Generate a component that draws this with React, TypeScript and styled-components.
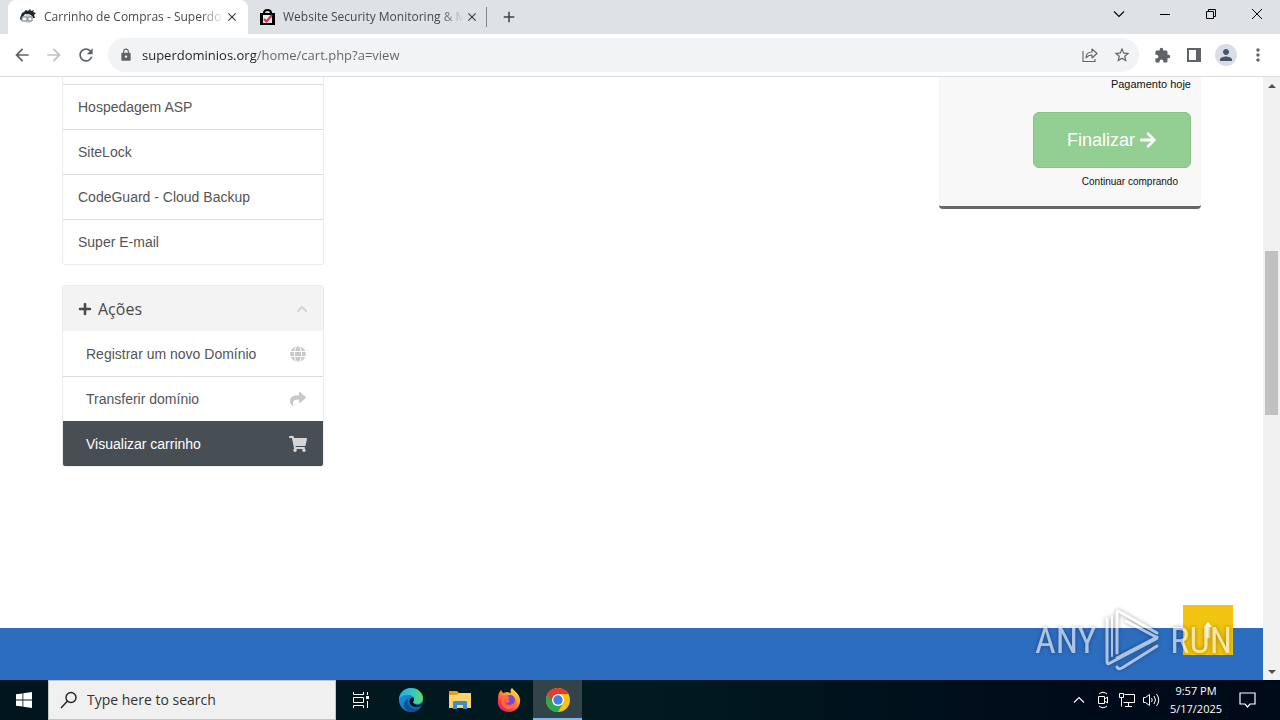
import React from "react";
import styled, { createGlobalStyle, css } from "styled-components";
import {
  MdArrowBack,
  MdArrowForward,
  MdClose,
  MdExtension,
  MdLock,
  MdMoreVert,
  MdPerson,
  MdRefresh,
  MdStarBorder,
  MdAdd,
} from "react-icons/md";
import {
  FaArrowRight,
  FaChevronUp,
  FaGlobe,
  FaPlus,
  FaShare,
  FaShoppingCart,
} from "react-icons/fa";

const uiFont = `"Open Sans", "Noto Sans", sans-serif`;
const pageFont = `"Liberation Sans", Arial, sans-serif`;

const GlobalStyle = createGlobalStyle`
  *, *::before, *::after { box-sizing: border-box; }
  body { margin: 0; background: #fff; overflow: hidden; }
  button, input { font: inherit; color: inherit; margin: 0; padding: 0; border: 0; background: none; }
  a { color: inherit; text-decoration: none; }
  svg { display: block; flex: none; }
  ul { list-style: none; margin: 0; padding: 0; }
`;

const Desktop = styled.div`
  position: relative;
  display: flex;
  flex-direction: column;
  height: 100vh;
  font-family: ${uiFont};
`;

/* Browser window */

const TabStrip = styled.header`
  display: flex;
  align-items: stretch;
  height: 34px;
  padding-left: 8px;
  background: #dee1e6;
`;

const Tab = styled.div<{ $active?: boolean }>`
  display: flex;
  align-items: center;
  width: 240px;
  padding: 0 8px 0 12px;
  font-size: 12px;
  line-height: 16px;
  color: #45494d;
  border-radius: 8px 8px 0 0;
  background: ${(p) => (p.$active ? "#fff" : "transparent")};
`;

const TabTitle = styled.span`
  flex: 1;
  min-width: 0;
  margin-left: 8px;
  overflow: hidden;
  white-space: nowrap;
  mask-image: linear-gradient(90deg, #000 calc(100% - 24px), transparent);
`;

const TabClose = styled.button`
  display: grid;
  place-items: center;
  width: 16px;
  height: 16px;
  color: #3c4043;
`;

const NewTab = styled.button`
  display: grid;
  place-items: center;
  width: 28px;
  margin-left: 8px;
  color: #3c4043;
`;

const TabDivider = styled.span`
  align-self: center;
  width: 1px;
  height: 20px;
  margin-left: -2px;
  background: #80868b;
`;

const WindowControls = styled.div`
  display: flex;
  margin-left: auto;
`;

const WindowButton = styled.button`
  display: grid;
  place-items: center;
  width: 46px;
  height: 28px;
`;

const Toolbar = styled.div`
  display: flex;
  align-items: center;
  height: 43px;
  padding: 0 6px;
  border-bottom: 1px solid #dadce0;
  background: #fff;
  color: #5f6368;
`;

const ToolButton = styled.button<{ $muted?: boolean }>`
  display: grid;
  place-items: center;
  width: 32px;
  height: 32px;
  color: ${(p) => (p.$muted ? "#bdc1c6" : "#5f6368")};
`;

const AddressBar = styled.div`
  display: flex;
  flex: 1;
  align-items: center;
  height: 34px;
  margin: 0 7px 0 6px;
  padding: 0 1px 0 11px;
  border-radius: 17px;
  background: #f1f3f4;
`;

const AddressInput = styled.input`
  flex: 1;
  min-width: 0;
  height: 20px;
  margin-left: 9px;
  font-size: 13px;
  line-height: 20px;
  outline: 0;
  background: linear-gradient(90deg, #202124 115px, #5f6368 115px);
  background-clip: text;
  color: transparent;
`;

const Avatar = styled.span`
  display: grid;
  place-items: center;
  width: 22px;
  height: 22px;
  border-radius: 50%;
  background: #dadde8;
  color: #4a5368;
`;

const Viewport = styled.div`
  display: flex;
  flex: 1;
  min-height: 0;
`;

const Page = styled.div`
  position: relative;
  display: flex;
  flex: 1;
  flex-direction: column;
  min-width: 0;
  overflow: hidden;
  font-family: ${pageFont};
`;

const Scrollbar = styled.div`
  display: flex;
  flex-direction: column;
  align-items: center;
  justify-content: space-between;
  width: 17px;
  background: #f1f1f1;
`;

const ScrollArrow = styled.button`
  display: grid;
  place-items: center;
  width: 17px;
  height: 17px;
  color: #505050;
`;

const ScrollTrack = styled.div`
  flex: 1;
  padding-top: 157px;
`;

const ScrollThumb = styled.div`
  width: 13px;
  height: 164px;
  background: #c1c1c1;
`;

/* Page content */

const Content = styled.main`
  display: flex;
  flex: 1;
  align-items: flex-start;
  justify-content: space-between;
  padding: 0 62px;
`;

const Sidebar = styled.aside`
  display: flex;
  flex-direction: column;
  gap: 20px;
  width: 262px;
`;

const Panel = styled.section<{ $continued?: boolean }>`
  border: 1px solid #ececec;
  border-radius: 3px;
  overflow: hidden;
  ${(p) =>
    p.$continued &&
    css`
      padding-top: 7px;
      border-top: 0;
      border-radius: 0 0 3px 3px;
    `}
`;

const PanelHeading = styled.h2`
  display: flex;
  align-items: center;
  gap: 6px;
  height: 45px;
  margin: 0;
  padding: 0 15px;
  background: #f3f3f3;
  color: #4a4a4a;
  font: 400 16px/24px ${uiFont};
`;

const CollapseButton = styled.button`
  margin-left: auto;
  color: #d3d3d3;
`;

const ItemLink = styled.a<{ $active?: boolean; $indent?: boolean }>`
  display: flex;
  align-items: center;
  justify-content: space-between;
  height: 45px;
  padding: 0 ${(p) => (p.$active ? "16px" : "17px")} 0 ${(p) => (p.$indent ? "23px" : "15px")};
  font-size: 14px;
  line-height: 20px;
  color: ${(p) => (p.$active ? "#fff" : "#555")};
  background: ${(p) => (p.$active ? "#474e54" : "#fff")};

  svg {
    color: ${(p) => (p.$active ? "#d6d6d6" : "#c8c8c8")};
  }
`;

const Item = styled.li<{ $ruled?: boolean }>`
  ${(p) =>
    p.$ruled &&
    css`
      border-top: 1px solid #ddd;
      ${ItemLink} {
        height: 44px;
      }
    `}
`;

const Summary = styled.section`
  display: flex;
  flex-direction: column;
  align-items: flex-end;
  width: 262px;
  padding: 0 10px 17px;
  border-bottom: 3px solid #666;
  border-radius: 0 0 4px 4px;
  background: #f8f8f8;
  color: #111;
`;

const TotalLabel = styled.p`
  margin: 0;
  font-size: 11px;
  line-height: 14px;
`;

const CheckoutButton = styled.button`
  display: flex;
  align-items: center;
  justify-content: center;
  gap: 4px;
  width: 158px;
  height: 56px;
  margin: 21px 0 7px;
  border: 1px solid #86c586;
  border-radius: 6px;
  background: #93ce93;
  color: #fff;
  font-size: 18px;
  line-height: 24px;
`;

const ContinueLink = styled.a`
  padding: 0 13px;
  font-size: 10px;
  line-height: 14px;
`;

const PageFooter = styled.footer`
  height: 52px;
  background: #2d6dbf;
`;

const BackToTop = styled.a`
  position: absolute;
  right: 30px;
  bottom: 25px;
  display: grid;
  place-items: center;
  width: 50px;
  height: 50px;
  background: #f1c40f;
  color: #fff;
`;

const Watermark = styled.div`
  position: absolute;
  right: 48px;
  bottom: 46px;
  display: flex;
  align-items: center;
  gap: 8px;
  color: #fff;
  opacity: 0.6;
  font: 400 36px/66px "Roboto Condensed", "Liberation Sans Narrow", "Liberation Sans", sans-serif;
  filter: drop-shadow(0 0 2px rgba(0, 0, 0, 0.6));
  pointer-events: none;
`;

/* Windows taskbar */

const Taskbar = styled.footer`
  display: flex;
  height: 40px;
  background: linear-gradient(90deg, #00151c, #001a20 50%, #000b1a 85%);
  color: #fff;
`;

const TaskButton = styled.button<{ $active?: boolean; $width?: number }>`
  display: grid;
  place-items: center;
  width: ${(p) => p.$width ?? 49}px;
  height: 40px;
  background: ${(p) => (p.$active ? "#34434a" : "transparent")};
  box-shadow: ${(p) => (p.$active ? "inset 0 -2px #76b9ed" : "none")};
`;

const SearchBox = styled.label`
  display: flex;
  align-items: center;
  gap: 9px;
  width: 288px;
  padding: 0 11px;
  border: 1px solid #c4c4c4;
  background: #f0f0f0;
  color: #222;
`;

const SearchInput = styled.input`
  flex: 1;
  min-width: 0;
  font-size: 14px;
  line-height: 20px;
  outline: 0;

  &::placeholder {
    color: #333;
    opacity: 1;
  }
`;

const Tray = styled.div`
  display: flex;
  align-items: center;
  margin-left: auto;
`;

const TrayButton = styled.button`
  display: grid;
  place-items: center;
  width: 24px;
  height: 40px;
`;

const Clock = styled.button`
  width: 66px;
  font-size: 11px;
  line-height: 18px;
  text-align: center;
`;

const NotificationButton = styled(TrayButton)`
  width: 36px;
`;

const ShowDesktop = styled.button`
  width: 15px;
  height: 40px;
`;

/* Drawings */

const line = { fill: "none", stroke: "currentColor" };

const FaceIcon = () => (
  <svg width="16" height="16" viewBox="0 0 16 16">
    <path d="M0 9 2 4 4 3 6 1 8 2 10 0 11 2 14 1 13 3 16 4 14 6 15 9 13 9 11 6 5 5 3 8 1 12Z" fill="#20272c" />
    <path d="M3 7 9 5 13 8 12 12 9 14 4 13 2 11Z" fill="#cfd8de" />
    <path d="M2 8h5v4H2ZM8 8h4v4H8Z" fill="#f8fafb" stroke="#7c878e" />
    <path d="M9 13 13 11" fill="none" stroke="#d7a071" />
  </svg>
);

const BagIcon = () => (
  <svg width="15" height="16" viewBox="0 0 15 16">
    <path d="M4 6V4q0-3 3.500-3T11 4v2" fill="none" stroke="#000" strokeWidth="2" />
    <path d="M0 4h15v12H0z" fill="#000" />
    <path d="M3 6h9v8H3z" fill="#f3e8ec" />
    <path d="m4 10 2.500 2.500L12 6" fill="none" stroke="#dc274c" strokeWidth="2" />
  </svg>
);

const ShareIcon = () => (
  <svg width="16" height="16" viewBox="0 0 16 16" {...line} strokeWidth="1.100">
    <path d="M1 4v10.500h12V12" />
    <path d="M4 11c0-4 2-6 6-6V2l5 4.500-5 4.500V8C7 8 5.500 9 4 11Z" strokeLinejoin="round" />
  </svg>
);

const PanelIcon = () => (
  <svg width="14" height="14" viewBox="0 0 14 14">
    <path d="M1 1h12v12H1z" {...line} strokeWidth="2" />
    <path d="M9 1h4v12H9z" fill="currentColor" />
  </svg>
);

const ChevronIcon = ({ up }: { up?: boolean }) => (
  <svg width="12" height="8" viewBox="0 0 12 8" {...line} strokeWidth="1.100">
    <path d={up ? "m1 6.500 5-5 5 5" : "m1 1.500 5 5 5-5"} />
  </svg>
);

const TriangleIcon = ({ up }: { up?: boolean }) => (
  <svg width="8" height="4" viewBox="0 0 8 4" fill="currentColor">
    <path d={up ? "M0 4 4 0 8 4Z" : "M0 0h8L4 4Z"} />
  </svg>
);

const ArrowUpIcon = () => (
  <svg width="8" height="16" viewBox="0 0 8 16" fill="currentColor">
    <path d="M4 0 8 5H5.500V16h-3V5H0Z" />
  </svg>
);

const PlayLogo = () => (
  <svg width="58" height="66" viewBox="0 0 58 66" fill="none" stroke="#fff" strokeWidth="3" strokeLinejoin="round" strokeLinecap="round">
    <path d="M13 45V5q0-3 3-1l37 21" />
    <path d="M3 11v43q0 3 3 1l46-24q2-1 0-2L22 13" />
    <path d="M13 50 53 29M53 38 18 60q-4 2-5-1" />
    <path d="M8 9v39" strokeWidth="2" />
  </svg>
);

const WindowsIcon = () => (
  <svg width="16" height="16" viewBox="0 0 16 16" fill="#fff">
    <path d="M0 2.300 6.500 1.400V7.600H0ZM7.300 1.300 16 0V7.600H7.300ZM0 8.400H6.500V14.600L0 13.700ZM7.300 8.400H16V16L7.300 14.700Z" />
  </svg>
);

const SearchIcon = () => (
  <svg width="18" height="18" viewBox="0 0 18 18" {...line} strokeWidth="1.400">
    <circle cx="11" cy="6.500" r="5" />
    <path d="m7.500 10-6.500 7" />
  </svg>
);

const TaskViewIcon = () => (
  <svg width="18" height="16" viewBox="0 0 18 16" {...line}>
    <path d="M1.500 0v2.500h10V0M1.500 16v-2.500h10V16M1.500 5.500h10v5h-10zM15.500 0v3M15.500 9v7" />
    <path d="M14 4h3v3h-3z" fill="currentColor" stroke="none" />
  </svg>
);

const EdgeIcon = () => (
  <svg width="24" height="24" viewBox="0 0 24 24">
    <defs>
      <linearGradient id="edge-top" x1="0" x2="1">
        <stop offset="0" stopColor="#28a8e0" />
        <stop offset=".6" stopColor="#36c8c0" />
        <stop offset="1" stopColor="#66dc58" />
      </linearGradient>
      <linearGradient id="edge-base" x1="0" x2="1" y2="1">
        <stop offset="0" stopColor="#1b9de2" />
        <stop offset="1" stopColor="#0c5aa8" />
      </linearGradient>
    </defs>
    <circle cx="12" cy="12" r="12" fill="url(#edge-base)" />
    <path d="M0 12C0 5 5 0 12 0s12 5 12 10c0 4-3 6-6 6-2 0-4-1-4-2s1-1 1-3c0-2-2-4-6-4-5 0-8 2-9 5Z" fill="url(#edge-top)" />
    <path d="M9 11c-2 6 3 10 8 10 2 0 4-1 5-2-2 3-5 5-9 5-5 0-8-4-8-8 0-2 2-4 4-5Z" fill="#0f4f96" />
    <path d="M15 11c0 2-1 2-1 3 0 2 3 3 5 3 2 0 4-1 5-3-1 4-4 5-7 5-5 0-8-4-6-8 2-2 4-2 4 0Z" fill="#00151c" />
  </svg>
);

const FolderIcon = () => (
  <svg width="22" height="18" viewBox="0 0 22 18">
    <path d="M0 0h8l2 2h12v15H0Z" fill="#e3a01b" />
    <path d="M0 4h8l2-2h12v15H0Z" fill="#f9d36c" />
    <path d="M4 18v-7q0-1 1-1h12q1 0 1 1v7h-4v-4H8v4Z" fill="#3b8fc8" />
  </svg>
);

const FirefoxIcon = () => (
  <svg width="24" height="24" viewBox="0 0 24 24">
    <defs>
      <linearGradient id="fox" x1=".9" y1="0" x2=".2" y2="1">
        <stop offset="0" stopColor="#fff04f" />
        <stop offset=".45" stopColor="#ff9226" />
        <stop offset=".75" stopColor="#ff3d4b" />
        <stop offset="1" stopColor="#e0157d" />
      </linearGradient>
    </defs>
    <path d="M2 5 4 2l2 3 4-1 4 1c-1-3 0-4 1-5 2 3 7 5 8 11 1 7-4 13-11 13S0 19 1 12c0-3 0-5 1-7Z" fill="url(#fox)" />
    <circle cx="13" cy="12" r="5" fill="#7548d8" />
    <path d="M5 8c4-2 6 0 8 2-3 1-2 2 0 3-2 2-5 2-6 0 0 4 4 6 7 4 4-1 5-5 3-8 4 5 2 11-5 12-6 0-9-6-7-13Z" fill="#ff6a3c" />
  </svg>
);

const ChromeIcon = () => (
  <svg width="24" height="24" viewBox="0 0 24 24">
    <circle cx="12" cy="12" r="12" fill="#fbc116" />
    <path d="M12 12 1.600 6A12 12 0 0 0 12 24l5.200-9Z" fill="#2da94f" />
    <path d="M1.600 6A12 12 0 0 1 22.400 6H12L6.800 15Z" fill="#e33b2e" />
    <circle cx="12" cy="12" r="6" fill="#fff" />
    <circle cx="12" cy="12" r="4.700" fill="#3f7fe8" />
  </svg>
);

const MeetNowIcon = () => (
  <svg width="12" height="18" viewBox="0 0 12 18" {...line}>
    <path d="M1.500 5.500h6v7h-6zM7.500 8l3-2v6l-3-2M2 3q4-3.500 8 0M2 15q4 3.500 8 0" />
  </svg>
);

const NetworkIcon = () => (
  <svg width="17" height="15" viewBox="0 0 17 15" {...line}>
    <path d="M5.500 1.500h10v8h-11M.500.500h4v4h-4zM2.500 4.500v9M9.500 9.500v4M6 13.500h7" />
  </svg>
);

const VolumeIcon = () => (
  <svg width="17" height="14" viewBox="0 0 17 14" {...line}>
    <path d="M.500 4.500h2l4-3v11l-4-3h-2zM8.500 5q1.500 2 0 4M11 3q3 4 0 8M13.500 1q4.500 6 0 12" />
  </svg>
);

const MessageIcon = () => (
  <svg width="17" height="16" viewBox="0 0 17 16" {...line} strokeWidth="1.200">
    <path d="M1 1h15v11h-5l-2.500 3L6 12H1z" />
  </svg>
);

const products = ["Hospedagem ASP", "SiteLock", "CodeGuard - Cloud Backup", "Super E-mail"];

const actions = [
  { label: "Registrar um novo Domínio", icon: <FaGlobe size={16} /> },
  { label: "Transferir domínio", icon: <FaShare size={16} />, ruled: true },
  { label: "Visualizar carrinho", icon: <FaShoppingCart size={18} />, active: true },
];

const tabs = [
  { title: "Carrinho de Compras - Superdo", icon: <FaceIcon />, active: true },
  { title: "Website Security Monitoring & M", icon: <BagIcon /> },
];

export default function App() {
  return (
    <Desktop>
      <GlobalStyle />
      <TabStrip>
        {tabs.map((tab) => (
          <Tab key={tab.title} $active={tab.active}>
            {tab.icon}
            <TabTitle>{tab.title}</TabTitle>
            <TabClose aria-label="Close tab"><MdClose size={14} /></TabClose>
          </Tab>
        ))}
        <TabDivider />
        <NewTab aria-label="New tab"><MdAdd size={18} /></NewTab>
        <WindowControls>
          <WindowButton aria-label="Search tabs"><ChevronIcon /></WindowButton>
          <WindowButton aria-label="Minimize">
            <svg width="10" height="10" viewBox="0 0 10 10" {...line}><path d="M0 5.500h10" /></svg>
          </WindowButton>
          <WindowButton aria-label="Restore">
            <svg width="10" height="10" viewBox="0 0 10 10" {...line}>
              <path d="M.500 2.500h7v7h-7zM2.500 2.500v-2h7v7h-2" />
            </svg>
          </WindowButton>
          <WindowButton aria-label="Close">
            <svg width="10" height="10" viewBox="0 0 10 10" {...line}><path d="m0 0 10 10M10 0 0 10" /></svg>
          </WindowButton>
        </WindowControls>
      </TabStrip>

      <Toolbar>
        <ToolButton aria-label="Back"><MdArrowBack size={20} /></ToolButton>
        <ToolButton aria-label="Forward" $muted><MdArrowForward size={20} /></ToolButton>
        <ToolButton aria-label="Reload"><MdRefresh size={20} /></ToolButton>
        <AddressBar>
          <MdLock size={14} />
          <AddressInput aria-label="Address" defaultValue="superdominios.org/home/cart.php?a=view" />
          <ToolButton aria-label="Share"><ShareIcon /></ToolButton>
          <ToolButton aria-label="Bookmark"><MdStarBorder size={18} /></ToolButton>
        </AddressBar>
        <ToolButton aria-label="Extensions"><MdExtension size={17} /></ToolButton>
        <ToolButton aria-label="Side panel"><PanelIcon /></ToolButton>
        <ToolButton aria-label="Profile"><Avatar><MdPerson size={18} /></Avatar></ToolButton>
        <ToolButton aria-label="Menu"><MdMoreVert size={20} /></ToolButton>
      </Toolbar>

      <Viewport>
        <Page>
          <Content>
            <Sidebar>
              <Panel $continued>
                <ul>
                  {products.map((name) => (
                    <Item key={name} $ruled>
                      <ItemLink href="#">{name}</ItemLink>
                    </Item>
                  ))}
                </ul>
              </Panel>
              <Panel>
                <PanelHeading>
                  <FaPlus size={14} />
                  Ações
                  <CollapseButton aria-label="Recolher"><FaChevronUp size={12} /></CollapseButton>
                </PanelHeading>
                <ul>
                  {actions.map((action) => (
                    <Item key={action.label} $ruled={action.ruled}>
                      <ItemLink href="#" $indent $active={action.active}>
                        {action.label}
                        {action.icon}
                      </ItemLink>
                    </Item>
                  ))}
                </ul>
              </Panel>
            </Sidebar>
            <Summary>
              <TotalLabel>Pagamento hoje</TotalLabel>
              <CheckoutButton>Finalizar <FaArrowRight size={18} /></CheckoutButton>
              <ContinueLink href="#">Continuar comprando</ContinueLink>
            </Summary>
          </Content>
          <PageFooter />
          <BackToTop href="#" aria-label="Voltar ao topo"><ArrowUpIcon /></BackToTop>
        </Page>
        <Scrollbar>
          <ScrollArrow aria-label="Scroll up"><TriangleIcon up /></ScrollArrow>
          <ScrollTrack><ScrollThumb /></ScrollTrack>
          <ScrollArrow aria-label="Scroll down"><TriangleIcon /></ScrollArrow>
        </Scrollbar>
      </Viewport>

      <Taskbar>
        <TaskButton aria-label="Start" $width={48}><WindowsIcon /></TaskButton>
        <SearchBox>
          <SearchIcon />
          <SearchInput aria-label="Search" placeholder="Type here to search" />
        </SearchBox>
        <TaskButton aria-label="Task view" $width={50}><TaskViewIcon /></TaskButton>
        <TaskButton aria-label="Edge"><EdgeIcon /></TaskButton>
        <TaskButton aria-label="File Explorer"><FolderIcon /></TaskButton>
        <TaskButton aria-label="Firefox"><FirefoxIcon /></TaskButton>
        <TaskButton aria-label="Chrome" $active><ChromeIcon /></TaskButton>
        <Tray>
          <TrayButton aria-label="Hidden icons"><ChevronIcon up /></TrayButton>
          <TrayButton aria-label="Meet now"><MeetNowIcon /></TrayButton>
          <TrayButton aria-label="Network"><NetworkIcon /></TrayButton>
          <TrayButton aria-label="Volume"><VolumeIcon /></TrayButton>
          <Clock>9:57 PM<br />5/17/2025</Clock>
          <NotificationButton aria-label="Notifications"><MessageIcon /></NotificationButton>
          <ShowDesktop aria-label="Show desktop" />
        </Tray>
      </Taskbar>

      <Watermark><span>ANY</span><PlayLogo /><span>RUN</span></Watermark>
    </Desktop>
  );
}
